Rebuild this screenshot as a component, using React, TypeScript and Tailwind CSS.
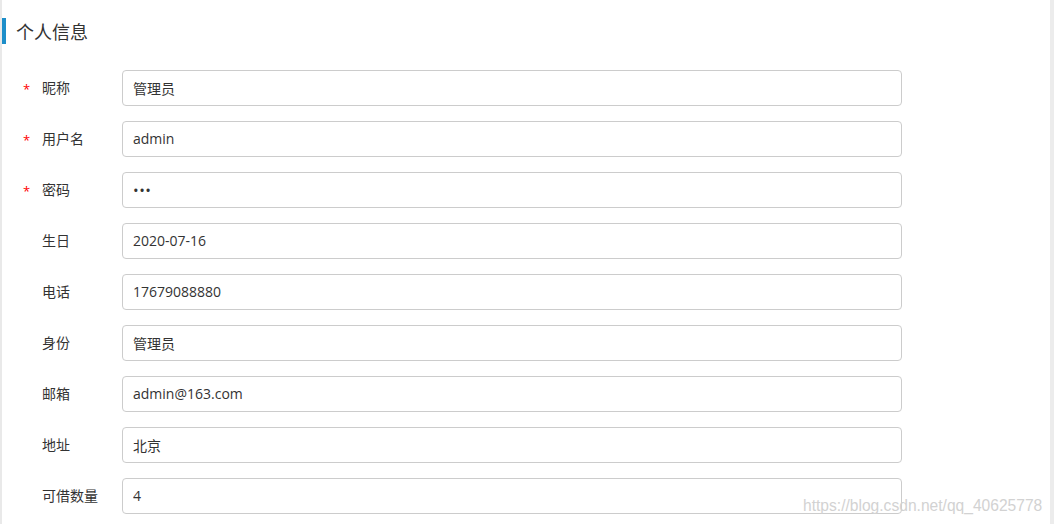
import React from 'react';

interface Field {
    label: string;
    value: string;
    required?: boolean;
    type?: string;
}

const fields: Field[] = [
    { label: '昵称', value: '管理员', required: true },
    { label: '用户名', value: 'admin', required: true },
    { label: '密码', value: 'abc', required: true, type: 'password' },
    { label: '生日', value: '2020-07-16' },
    { label: '电话', value: '17679088880' },
    { label: '身份', value: '管理员' },
    { label: '邮箱', value: 'admin@163.com' },
    { label: '地址', value: '北京' },
    { label: '可借数量', value: '4' },
];

const font = { fontFamily: '"Open Sans", "Noto Sans CJK SC", sans-serif' };

export default function App() {
    return (
        <div className="relative flex h-[524px] w-full overflow-hidden bg-white" style={font}>
            <div className="w-[2px] shrink-0 bg-[#e9e9e9]" />

            <div className="flex-1 pt-[18px]">
                {/* Section title */}
                <div className="flex h-[26px] items-center">
                    <div className="h-[26px] w-[4px] bg-[#1d8ec9]" />
                    <h2 className="ml-[10px] h-[26px] pt-[3px] text-[18px] leading-[23px] text-[#333]">个人信息</h2>
                </div>

                <form className="mt-[26px] flex flex-col gap-[15px]">
                    {fields.map(f => (
                        <div key={f.label} className="flex h-[36px] items-center">
                            <div className="flex w-[120px] items-center pl-[21px] text-[14px] text-[#333]">
                                <span className="w-[19px] pt-[3px] text-[13px] text-[#f00]">{f.required ? '*' : ''}</span>
                                <span className="-mt-[1px]">{f.label}</span>
                            </div>
                            <input
                                type={f.type || 'text'}
                                value={f.value}
                                readOnly
                                className={`h-[36px] w-[780px] rounded-[4px] border border-[#cccccc] px-[10px] pb-[1px] text-[#333] outline-none ${f.type === 'password' ? 'text-[15px] tracking-[0.5px]' : 'text-[14px]'}`}
                                style={font}
                            />
                        </div>
                    ))}
                </form>
            </div>

            <div className="w-[4px] shrink-0 bg-[#ececec]" />

            {/* Watermark */}
            <div
                className="pointer-events-none absolute left-[803px] top-[496px] text-[15.6px] leading-[20px] text-[#d2d2d2]"
                style={{ fontFamily: '"Liberation Sans", Arial, sans-serif' }}
            >
                https://blog.csdn.net/qq_40625778
            </div>
        </div>
    );
}
